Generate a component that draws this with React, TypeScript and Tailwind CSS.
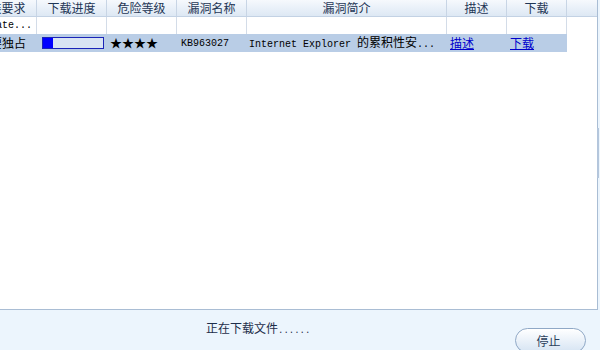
const cjk = "font-['SimSun','Noto_Sans_CJK_SC',sans-serif]";
const mono = "font-['Liberation_Mono','DejaVu_Sans_Mono',monospace]";

const columns = [
  { title: "安装要求", width: "w-[70px]" },
  { title: "下载进度", width: "w-[70px]" },
  { title: "危险等级", width: "w-[70px]" },
  { title: "漏洞名称", width: "w-[70px]" },
  { title: "漏洞简介", width: "w-[200px]" },
  { title: "描述", width: "w-[60px]" },
  { title: "下载", width: "w-[60px]" },
];

function Header() {
  return (
    <div className="flex h-[17px] w-[630px] border-b border-[#c3d2e4] bg-gradient-to-b from-[#f6f9fd] to-[#dde8f4]">
      {columns.map((c) => (
        <div
          key={c.title}
          className={`${c.width} shrink-0 border-r border-[#c8d5e5] text-center text-[12px] leading-[16px] text-[#1f3655] ${cjk}`}
        >
          {c.title}
        </div>
      ))}
      <div className="flex-1" />
    </div>
  );
}

function EmptyRow() {
  return (
    <div className="flex h-[17px]">
      <div className={`w-[70px] shrink-0 overflow-hidden whitespace-nowrap border-r border-[#d3dce8] pl-[11px] text-[10px] leading-[17px] text-black ${mono}`}>
        Update...
      </div>
      {columns.slice(1).map((c) => (
        <div key={c.title} className={`${c.width} shrink-0 border-r border-[#d3dce8]`} />
      ))}
    </div>
  );
}

function SelectedRow() {
  return (
    <div className="flex h-[18px] w-[600px] items-center bg-[#b9cde6] text-black">
      <div className={`w-[70px] shrink-0 text-center text-[12px] ${cjk}`}>需要独占</div>
      <div className="flex w-[70px] shrink-0 pl-[5px]">
        <div className="flex h-[12px] w-[62px] border border-[#1b24b8] bg-[#d9e4f3]">
          <div className="w-[10px] bg-[#0000ff]" />
        </div>
      </div>
      <div className={`w-[70px] shrink-0 pl-[3px] text-[12px] leading-[18px] ${cjk}`}>★★★★</div>
      <div className={`w-[70px] shrink-0 pl-[4px] text-[10px] ${mono}`}>KB963027</div>
      <div className="w-[200px] shrink-0 whitespace-nowrap pl-[2px] leading-[18px]">
        <span className={`text-[10px] ${mono}`}>Internet Explorer </span>
        <span className={`text-[12px] ${cjk}`}>的累积性安</span>
        <span className={`text-[10px] ${mono}`}>...</span>
      </div>
      <div className={`w-[60px] shrink-0 pl-[3px] text-[12px] ${cjk}`}>
        <a href="#" className="text-[#0000cc] underline">描述</a>
      </div>
      <div className={`w-[60px] shrink-0 pl-[3px] text-[12px] ${cjk}`}>
        <a href="#" className="text-[#0000cc] underline">下载</a>
      </div>
    </div>
  );
}

export default function App() {
  return (
    <div className="relative flex h-[350px] w-[600px] flex-col overflow-hidden bg-[#ecf5fd]">
      <div className="relative h-[310px] w-[598px] overflow-hidden border-r border-b border-[#a9bdd4] bg-white">
        <div className="ml-[-33px]">
          <Header />
          <EmptyRow />
          <SelectedRow />
        </div>
      </div>
      <div className="absolute left-[597px] top-[128px] h-[50px] w-[2px] bg-[#b4c6dc]" />

      <div className="relative flex-1">
        <div className="pl-[206px] pt-[9px] whitespace-nowrap leading-[16px] text-[#1e2e4a]">
          <span className={`text-[12px] ${cjk}`}>正在下载文件</span>
          <span className={`text-[9px] ${mono}`}>......</span>
        </div>
        <button className={`absolute left-[515px] top-[18px] h-[25px] w-[71px] rounded-full border border-[#8fa8c6] bg-gradient-to-b from-white to-[#d6e4f3] pr-[4px] text-[12px] text-[#2b3f5c] shadow-[inset_0_1px_0_white] ${cjk}`}>
          停止
        </button>
      </div>
    </div>
  );
}
